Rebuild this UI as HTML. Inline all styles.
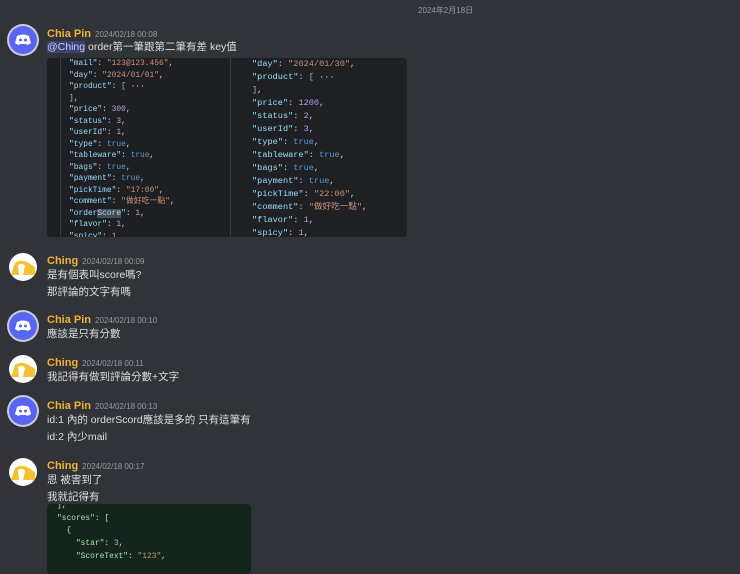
<!DOCTYPE html>
<html><head><meta charset="utf-8"><style>
body{margin:0;width:740px;height:565px;background:#313338;overflow:hidden;position:relative;font-family:"Liberation Sans","Noto Sans CJK TC",sans-serif;color:#dbdee1}
.a{position:absolute}
.hd{line-height:13px;height:13px;white-space:nowrap}
.name{font-size:11px;font-weight:bold;color:#f0b232}
.ts{font-size:8px;color:#949ba4;margin-left:4px;font-weight:normal}
.msg{font-size:10.5px;color:#dbdee1;line-height:17px;white-space:nowrap}
.av{position:absolute;left:9px;width:28px;height:28px;border-radius:50%}
.dc{background:#5865f2;box-shadow:0 0 0 2px #c9cbd6;}
.ch{background:#fff;overflow:hidden}
pre{margin:0;font-family:"Liberation Mono","Noto Sans CJK TC",monospace;color:#9cdcfe}
.s{color:#ce9178}.n{color:#b5a3e6}.b{color:#569cd6}.p{color:#d4d4d4}.g{color:#7fcf9f}
</style></head><body>
<div class="a" style="left:418px;top:6px;font-size:8px;line-height:10px;color:#949ba4">2024年2月18日</div>

<svg width="0" height="0" style="position:absolute"><defs>
<symbol id="dcl" viewBox="0 0 28 28"><path d="M8 10 Q14 7 20 10 L22 17 Q18 20 17 18 L11 18 Q10 20 6 17 Z" fill="#fff"/><circle cx="11.5" cy="14" r="1.5" fill="#5865f2"/><circle cx="16.5" cy="14" r="1.5" fill="#5865f2"/></symbol>
<symbol id="chl" viewBox="0 0 28 28"><path d="M2 22 L6 10 Q12 6 18 9 L26 14 L26 22 Z" fill="#f2c230"/><path d="M9 12 Q13 9 16 13 L14 22 L10 22 Z" fill="#fff"/></symbol>
</defs></svg>

<div class="av dc" style="top:26px"><svg width="28" height="28"><use href="#dcl"/></svg></div>
<div class="a hd" style="left:47px;top:26px"><span class="name">Chia Pin</span><span class="ts">2024/02/18 00:08</span></div>
<div class="a msg" style="left:47px;top:39px"><span style="background:#3c4270;color:#c9cdfb">@Ching</span> order第一筆跟第二筆有差 key值</div>

<div class="a" style="left:47px;top:58px;width:360px;height:179px;background:#1f2024;border-radius:4px;overflow:hidden">
<div class="a" style="left:0;top:0;width:182px;height:179px;background:#1e1f22"></div>
<div class="a" style="left:13px;top:0;width:1px;height:179px;background:#3a3c42"></div>
<div class="a" style="left:183px;top:0;width:1px;height:179px;background:#3a3c42"></div>
<pre class="a" style="left:22px;top:0;font-size:7.9px;line-height:11.5px">"mail"<span class="p">: </span><span class="s">"123@123.456"</span><span class="p">,</span>
"day"<span class="p">: </span><span class="s">"2024/01/01"</span><span class="p">,</span>
"product"<span class="p">: </span><span class="g">[</span><span class="p"> ···</span>
<span class="g">]</span><span class="p">,</span>
"price"<span class="p">: </span><span class="n">300</span><span class="p">,</span>
"status"<span class="p">: </span><span class="n">3</span><span class="p">,</span>
"userId"<span class="p">: </span><span class="n">1</span><span class="p">,</span>
"type"<span class="p">: </span><span class="b">true</span><span class="p">,</span>
"tableware"<span class="p">: </span><span class="b">true</span><span class="p">,</span>
"bags"<span class="p">: </span><span class="b">true</span><span class="p">,</span>
"payment"<span class="p">: </span><span class="b">true</span><span class="p">,</span>
"pickTime"<span class="p">: </span><span class="s">"17:00"</span><span class="p">,</span>
"comment"<span class="p">: </span><span class="s">"做好吃一點"</span><span class="p">,</span>
"order<span style="background:#4a4d55">Score</span>"<span class="p">: </span><span class="n">1</span><span class="p">,</span>
"flavor"<span class="p">: </span><span class="n">1</span><span class="p">,</span>
"spicy"<span class="p">: </span><span class="n">1</span></pre>
<pre class="a" style="left:205px;top:0;font-size:8.6px;line-height:13px">"day"<span class="p">: </span><span class="s">"2024/01/30"</span><span class="p">,</span>
"product"<span class="p">: </span><span class="g">[</span><span class="p"> ···</span>
<span class="g">]</span><span class="p">,</span>
"price"<span class="p">: </span><span class="n">1200</span><span class="p">,</span>
"status"<span class="p">: </span><span class="n">2</span><span class="p">,</span>
"userId"<span class="p">: </span><span class="n">3</span><span class="p">,</span>
"type"<span class="p">: </span><span class="b">true</span><span class="p">,</span>
"tableware"<span class="p">: </span><span class="b">true</span><span class="p">,</span>
"bags"<span class="p">: </span><span class="b">true</span><span class="p">,</span>
"payment"<span class="p">: </span><span class="b">true</span><span class="p">,</span>
"pickTime"<span class="p">: </span><span class="s">"22:00"</span><span class="p">,</span>
"comment"<span class="p">: </span><span class="s">"做好吃一點"</span><span class="p">,</span>
"flavor"<span class="p">: </span><span class="n">1</span><span class="p">,</span>
"spicy"<span class="p">: </span><span class="n">1</span><span class="p">,</span></pre>
</div>

<div class="av ch" style="top:253px"><svg width="28" height="28"><use href="#chl"/></svg></div>
<div class="a hd" style="left:47px;top:253px"><span class="name">Ching</span><span class="ts">2024/02/18 00:09</span></div>
<div class="a msg" style="left:47px;top:267px">是有個表叫score嗎?<br>那評論的文字有嗎</div>

<div class="av dc" style="top:312px"><svg width="28" height="28"><use href="#dcl"/></svg></div>
<div class="a hd" style="left:47px;top:312px"><span class="name">Chia Pin</span><span class="ts">2024/02/18 00:10</span></div>
<div class="a msg" style="left:47px;top:326px">應該是只有分數</div>

<div class="av ch" style="top:355px"><svg width="28" height="28"><use href="#chl"/></svg></div>
<div class="a hd" style="left:47px;top:355px"><span class="name">Ching</span><span class="ts">2024/02/18 00:11</span></div>
<div class="a msg" style="left:47px;top:369px">我記得有做到評論分數+文字</div>

<div class="av dc" style="top:397px"><svg width="28" height="28"><use href="#dcl"/></svg></div>
<div class="a hd" style="left:47px;top:398px"><span class="name">Chia Pin</span><span class="ts">2024/02/18 00:13</span></div>
<div class="a msg" style="left:47px;top:412px">id:1 內的 orderScord應該是多的 只有這筆有<br>id:2 內少mail</div>

<div class="av ch" style="top:458px"><svg width="28" height="28"><use href="#chl"/></svg></div>
<div class="a hd" style="left:47px;top:458px"><span class="name">Ching</span><span class="ts">2024/02/18 00:17</span></div>
<div class="a msg" style="left:47px;top:472px">恩 被害到了<br>我就記得有</div>

<div class="a" style="left:47px;top:504px;width:204px;height:70px;background:#14261b;border-radius:4px;overflow:hidden">
<pre class="a" style="left:10px;top:-4px;font-size:7.9px;line-height:12.7px;color:#a6e3b8"><span class="p">],</span>
"scores"<span class="p">: [</span>
<span class="p">  {</span>
    "star"<span class="p">: </span><span class="n">3</span><span class="p">,</span>
    "ScoreText"<span class="p">: </span><span class="s">"123"</span><span class="p">,</span></pre>
</div>
</body></html>
